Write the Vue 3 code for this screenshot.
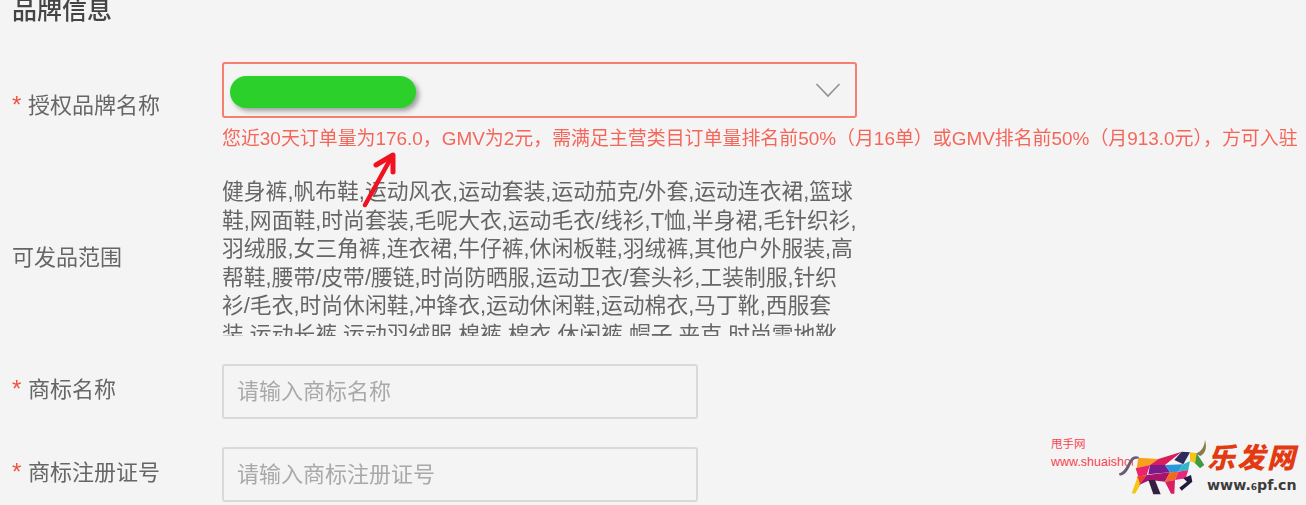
<template>
  <div class="page">
    <div class="sheet">
      <h3 class="title">品牌信息</h3>

      <div class="row row-select">
        <label class="label"><span class="star">*</span>授权品牌名称</label>
        <div class="field">
          <div class="select">
            <span class="mask"></span>
            <svg class="chevron" width="26" height="16" viewBox="0 0 26 16">
              <path d="M1.5 2 L13 14 L24.5 2" fill="none" stroke="#8f9296" stroke-width="1.6" />
            </svg>
          </div>
          <p class="hint">您近30天订单量为176.0，GMV为2元，需满足主营类目订单量排名前50%（月16单）或GMV排名前50%（月913.0元），方可入驻</p>
        </div>
      </div>

      <div class="row row-scope">
        <label class="label plain">可发品范围</label>
        <div class="scope">
          <div v-for="line in scopeLines" :key="line">{{ line }}</div>
        </div>
      </div>

      <div v-for="item in inputs" :key="item.label" class="row row-input">
        <label class="label"><span class="star">*</span>{{ item.label }}</label>
        <div class="input">{{ item.placeholder }}</div>
      </div>
    </div>

    <!-- red annotation arrow drawn over the form -->
    <svg class="arrow" width="50" height="62" viewBox="0 0 50 62">
      <path d="M7 53 L33 6" stroke="#f01220" stroke-width="4.5" stroke-linecap="round" fill="none" />
      <path d="M18 13 L35 3 L35 20" stroke="#f01220" stroke-width="5" stroke-linecap="round" stroke-linejoin="round" fill="none" />
    </svg>

    <!-- watermark -->
    <div class="mark-left">
      <div>甩手网</div>
      <div class="mark-url">www.shuaishou</div>
    </div>
    <svg class="bull" width="100" height="65" viewBox="0 0 300 195">
      <path d="M12 115 C28 112 36 90 45 75 C52 64 62 62 72 66 L70 72 C60 70 54 74 48 86 C40 104 32 120 14 122 Z" fill="#6b5b72" />
      <polygon points="70,68 130,72 105,90 65,100" fill="#f7a11d" />
      <polygon points="62,100 105,90 95,120 70,125" fill="#e8246a" />
      <polygon points="65,125 95,120 72,150" fill="#ee3a33" />
      <polygon points="68,125 76,150 60,176 50,175" fill="#f5c518" />
      <polygon points="130,72 200,50 150,90 105,90" fill="#d91e5b" />
      <polygon points="105,90 150,90 165,112 100,118" fill="#7a1a8c" />
      <polygon points="95,120 165,112 150,140 105,135 72,150" fill="#a8146c" />
      <polygon points="100,135 120,135 137,178 115,178" fill="#352040" />
      <polygon points="150,90 205,88 190,110 165,112" fill="#2d97dc" />
      <polygon points="200,50 225,52 205,88 178,75" fill="#2e2a5c" />
      <polygon points="165,112 190,110 180,135 150,140" fill="#ef6a20" />
      <polygon points="150,140 180,135 178,176 168,176" fill="#d81f63" />
      <polygon points="205,88 225,78 220,105 190,110" fill="#32b7c8" />
      <polygon points="190,110 220,105 212,130 180,135" fill="#e6287c" />
      <polygon points="225,52 245,55 240,85 225,78" fill="#f7c416" />
      <polygon points="245,55 268,90 255,100 240,85" fill="#3f9a40" />
      <polygon points="205,130 228,120 232,140 200,167 193,158 216,140" fill="#241c3f" />
      <path d="M243 56 C260 48 268 36 270 15 C276 36 273 54 256 63 Z" fill="#8a7a48" />
    </svg>
    <div class="logo-text">
      <div class="logo-cn">乐发网</div>
      <div class="logo-url">www.<small>6</small>pf.cn</div>
    </div>
  </div>
</template>

<script setup>
const scopeLines = [
  '健身裤,帆布鞋,运动风衣,运动套装,运动茄克/外套,运动连衣裙,篮球',
  '鞋,网面鞋,时尚套装,毛呢大衣,运动毛衣/线衫,T恤,半身裙,毛针织衫,',
  '羽绒服,女三角裤,连衣裙,牛仔裤,休闲板鞋,羽绒裤,其他户外服装,高',
  '帮鞋,腰带/皮带/腰链,时尚防晒服,运动卫衣/套头衫,工装制服,针织',
  '衫/毛衣,时尚休闲鞋,冲锋衣,运动休闲鞋,运动棉衣,马丁靴,西服套',
  '装,运动长裤,运动羽绒服,棉裤,棉衣,休闲裤,帽子,夹克,时尚雪地靴'
]

const inputs = [
  { label: '商标名称', placeholder: '请输入商标名称' },
  { label: '商标注册证号', placeholder: '请输入商标注册证号' }
]
</script>

<style>
html,
body {
  margin: 0;
  background: #f4f4f4;
  overflow: hidden;
}
</style>

<style scoped>
.page {
  position: relative;
  width: 1306px;
  height: 505px;
  overflow: hidden;
  background: #f4f4f4;
  font-family: "Liberation Sans", "Noto Sans CJK SC", sans-serif;
}

.sheet {
  display: flex;
  flex-direction: column;
  padding-left: 12px;
  filter: blur(0.6px);
}

.title {
  margin: -4px 0 0;
  height: 28px;
  font-size: 25px;
  line-height: 28px;
  font-weight: 500;
  color: #444;
}

.row {
  display: flex;
  align-items: center;
}

.label {
  flex: none;
  width: 210px;
  padding-bottom: 4px;
  font-size: 22px;
  line-height: 30px;
  color: #666;
  white-space: nowrap;
}

.label.plain {
  padding: 2px 0 0;
}

.star {
  display: inline-block;
  width: 16px;
  color: #f0523d;
  font-size: 24px;
  line-height: 20px;
}

.row-select {
  align-items: flex-start;
  margin-top: 38px;
}

.row-select .label {
  margin-top: 29px;
}

.field {
  width: 1084px;
}

.select {
  box-sizing: border-box;
  display: flex;
  align-items: center;
  justify-content: space-between;
  width: 635px;
  height: 56px;
  padding: 0 14px 0 6px;
  border: 2px solid #f77e70;
  border-radius: 3px;
}

.mask {
  width: 186px;
  height: 32px;
  margin-top: 4px;
  border-radius: 16px;
  background: #2bd02b;
  box-shadow: 3px 3px 5px rgba(0, 0, 0, 0.35);
}

.hint {
  margin: 10px 0 0;
  font-size: 18.93px;
  line-height: 22px;
  color: #f5665a;
  white-space: nowrap;
}

.row-scope {
  margin-top: 28px;
}

.scope {
  width: 640px;
  height: 158px;
  overflow: hidden;
  font-size: 21.8px;
  line-height: 28.5px;
  color: #666;
  white-space: nowrap;
}

.row-input {
  margin-top: 28px;
}

.input {
  box-sizing: border-box;
  width: 476px;
  height: 55px;
  padding-left: 13px;
  border: 2px solid #d9d9d9;
  border-radius: 3px;
  font-size: 22px;
  line-height: 51px;
  color: #a9a9a9;
}

.arrow {
  position: absolute;
  left: 358px;
  top: 152px;
  filter: blur(0.6px);
}

.mark-left {
  position: absolute;
  left: 1051px;
  top: 435px;
  width: 82px;
  overflow: hidden;
  font-size: 11.5px;
  line-height: 18px;
  color: #f8434f;
  white-space: nowrap;
}

.mark-url {
  font-size: 12.5px;
}

.bull {
  position: absolute;
  left: 1115px;
  top: 435px;
}

.logo-text {
  position: absolute;
  left: 1207px;
  top: 437px;
}

.logo-cn {
  font-family: "Noto Sans CJK SC", sans-serif;
  font-size: 28px;
  font-style: italic;
  font-weight: 900;
  line-height: 38px;
  letter-spacing: 2px;
  color: #e33a12;
  white-space: nowrap;
}

.logo-url {
  margin-top: 1px;
  font-family: "DejaVu Sans", sans-serif;
  font-size: 14.2px;
  font-weight: 700;
  line-height: 18px;
  color: #3c3c3c;
  white-space: nowrap;
}

.logo-url small {
  font-size: 9px;
}
</style>
